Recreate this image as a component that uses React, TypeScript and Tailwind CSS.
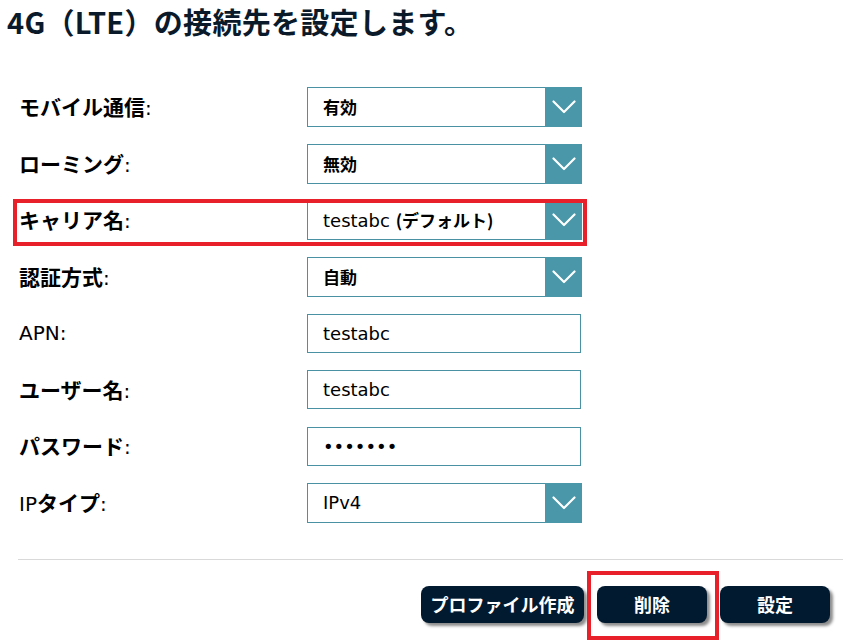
import React from 'react';

const LATIN = { fontFamily: '"DejaVu Sans", "Noto Sans CJK JP", sans-serif' };

type Seg = { t: string; jp?: boolean };

const fields: { label: Seg[]; kind: 'select' | 'text' | 'password'; value: Seg[] }[] = [
  { label: [{ t: 'モバイル通信', jp: true }, { t: ':' }], kind: 'select', value: [{ t: '有効', jp: true }] },
  { label: [{ t: 'ローミング', jp: true }, { t: ':' }], kind: 'select', value: [{ t: '無効', jp: true }] },
  { label: [{ t: 'キャリア名', jp: true }, { t: ':' }], kind: 'select', value: [{ t: 'testabc ' }, { t: '(デフォルト)', jp: true }] },
  { label: [{ t: '認証方式', jp: true }, { t: ':' }], kind: 'select', value: [{ t: '自動', jp: true }] },
  { label: [{ t: 'APN:' }], kind: 'text', value: [{ t: 'testabc' }] },
  { label: [{ t: 'ユーザー名', jp: true }, { t: ':' }], kind: 'text', value: [{ t: 'testabc' }] },
  { label: [{ t: 'パスワード', jp: true }, { t: ':' }], kind: 'password', value: [{ t: '•••••••' }] },
  { label: [{ t: 'IP' }, { t: 'タイプ', jp: true }, { t: ':' }], kind: 'select', value: [{ t: 'IPv4' }] },
];

const Segs = ({ segs, size }: { segs: Seg[]; size: string }) => (
  <>
    {segs.map((s, i) =>
      s.jp ? (
        <span key={i} className={`font-bold ${size === 'lg' ? 'text-[21px]' : 'text-[17px]'}`} style={{ fontFamily: '"Noto Sans CJK JP", sans-serif' }}>
          {s.t}
        </span>
      ) : (
        <span key={i} className={`font-normal whitespace-pre ${size === 'lg' ? 'text-[20px]' : 'text-[18px]'}`} style={LATIN}>
          {s.t}
        </span>
      )
    )}
  </>
);

const Chevron = () => (
  <svg width="24" height="14" viewBox="0 0 24 14" fill="none">
    <polyline points="1.5,1.5 12,12 22.5,1.5" stroke="white" strokeWidth="2.2" strokeLinecap="round" strokeLinejoin="round" />
  </svg>
);

export default function App() {
  return (
    <div className="relative w-[863px] h-[643px] overflow-hidden bg-white text-black" style={LATIN}>
      {/* Title */}
      <h1
        className="pl-[7px] pt-[4px] text-[29px] leading-[34px] font-bold text-[#0b1a2b] tracking-[0.3px]"
        style={{ fontFamily: '"Noto Sans CJK JP", sans-serif' }}
      >
        4G（LTE）の接続先を設定します。
      </h1>

      {/* Form */}
      <div className="mt-[49px] flex flex-col gap-[16.5px]">
        {fields.map((f, i) => (
          <div key={i} className="flex items-center h-[40px]">
            <div className="w-[307px] pl-[19px] flex items-baseline text-black">
              <Segs segs={f.label} size="lg" />
            </div>
            {f.kind === 'select' ? (
              <div className="w-[275px] h-[40px] flex border border-[#4a91a3]">
                <div className="flex-1 flex items-center pl-[15px] text-black">
                  <Segs segs={f.value} size="md" />
                </div>
                <div className="w-[37px] -my-px -mr-px h-[40px] bg-[#4997a9] flex items-center justify-center">
                  <Chevron />
                </div>
              </div>
            ) : (
              <div className="w-[274px] h-[39px] flex items-center pl-[15px] border border-[#4a91a3] text-black">
                {f.kind === 'password' ? (
                  <span className="text-[18px]" style={LATIN}>•••••••</span>
                ) : (
                  <Segs segs={f.value} size="md" />
                )}
              </div>
            )}
          </div>
        ))}
      </div>

      {/* Separator */}
      <div className="mt-[36px] ml-[18px] mr-[20px] h-px bg-[#d9d9d9]" />

      {/* Buttons */}
      <div className="mt-[26px] flex justify-end gap-[13px] pr-[33px]">
        {[
          { t: 'プロファイル作成', w: 'w-[163px]' },
          { t: '削除', w: 'w-[110px]' },
          { t: '設定', w: 'w-[110px]' },
        ].map((b) => (
          <button
            key={b.t}
            className={`${b.w} h-[37px] rounded-[8px] bg-[#021a2f] text-white text-[18px] font-bold shadow-[3px_3px_3px_rgba(0,0,0,0.45)] flex items-center justify-center`}
            style={{ fontFamily: '"Noto Sans CJK JP", sans-serif' }}
          >
            {b.t}
          </button>
        ))}
      </div>

      {/* Red annotation boxes */}
      <div className="absolute left-[13px] top-[199px] w-[574px] h-[47px] border-[4px] border-[#e8202a] pointer-events-none" />
      <div className="absolute left-[587px] top-[571px] w-[132px] h-[69px] border-[4px] border-[#e8202a] pointer-events-none" />
    </div>
  );
}
